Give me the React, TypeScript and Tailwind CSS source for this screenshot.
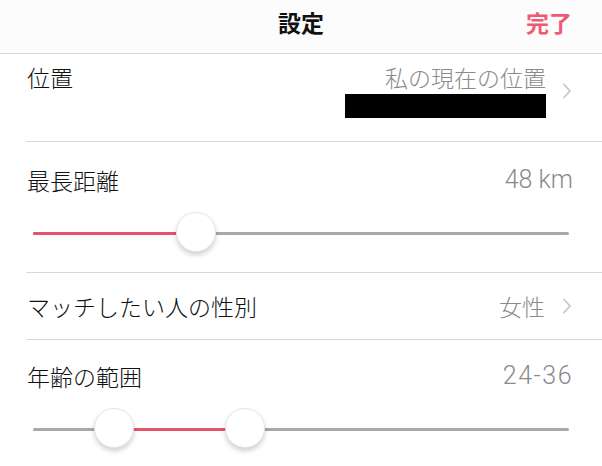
import React from "react";

const jp = "font-['Noto_Sans_CJK_JP','Noto_Sans',sans-serif]";
const num = "font-['Roboto','Liberation_Sans',sans-serif]";

function Chevron() {
  return (
    <svg width="10" height="16" viewBox="0 0 10 16" className="shrink-0">
      <polyline
        points="2,1.5 8,8 2,14.5"
        fill="none"
        stroke="#c7c7cc"
        strokeWidth="1.8"
        strokeLinecap="round"
        strokeLinejoin="round"
      />
    </svg>
  );
}

function Thumb({ className }: { className: string }) {
  return (
    <div
      className={`absolute top-0 h-[40px] w-[40px] rounded-full border border-[#e6e6e6] bg-white shadow-[0_3px_5px_rgba(0,0,0,0.18)] ${className}`}
    />
  );
}

function Divider() {
  return <div className="ml-[26px] border-t border-[#d8d8d8]" />;
}

export default function App() {
  return (
    <div className={`h-[466px] w-[602px] overflow-hidden bg-white ${jp}`}>
      {/* Header */}
      <header className="relative flex h-[54px] items-start justify-center border-b border-[#d6d6d6] bg-[#fcfcfc] pt-[8px]">
        <h1 className="text-[23px] font-bold leading-[28px] text-[#111]">設定</h1>
        <button className="absolute right-[30px] top-[8px] text-[23px] font-bold leading-[28px] text-[#ee5a73]">
          完了
        </button>
      </header>

      {/* Location */}
      <div className="flex items-start justify-between pb-[23px] pl-[27px] pr-[30px] pt-[9px]">
        <span className="text-[23px] font-light leading-[28px] text-[#111]">位置</span>
        <div className="flex items-center gap-[16px]">
          <div className="flex flex-col items-end">
            <span className="text-[23px] font-light leading-[28px] text-[#8a8a8a]">私の現在の位置</span>
            <div className="mt-[3px] h-[24px] w-[201px] bg-black" />
          </div>
          <Chevron />
        </div>
      </div>
      <Divider />

      {/* Max distance */}
      <div className="pb-[20px] pt-[24px]">
        <div className="flex items-center justify-between pl-[27px] pr-[29px]">
          <span className="text-[23px] font-light leading-[28px] text-[#111]">最長距離</span>
          <span className={`${num} text-[25px] font-light leading-[28px] text-[#8a8a8a]`}>48 km</span>
        </div>
        <div className="relative mx-[33px] mt-[18px] h-[40px]">
          <div className="absolute left-0 right-0 top-[20px] h-[3px] rounded-full bg-[#a8a8a8]" />
          <div className="absolute left-0 top-[20px] h-[3px] w-[144px] rounded-full bg-[#e4526b]" />
          <Thumb className="left-[143px]" />
        </div>
      </div>
      <Divider />

      {/* Gender */}
      <div className="flex items-center justify-between pb-[19px] pl-[27px] pr-[30px] pt-[19px]">
        <span className="text-[23px] font-light leading-[28px] text-[#111]">マッチしたい人の性別</span>
        <div className="flex items-center gap-[17px]">
          <span className="text-[23px] font-light leading-[28px] text-[#8a8a8a]">女性</span>
          <Chevron />
        </div>
      </div>
      <Divider />

      {/* Age range */}
      <div className="pt-[22px]">
        <div className="flex items-center justify-between pl-[27px] pr-[29px]">
          <span className="text-[23px] font-light leading-[28px] text-[#111]">年齢の範囲</span>
          <span className={`${num} text-[25px] font-light leading-[28px] tracking-[1.5px] text-[#8a8a8a]`}>24-36</span>
        </div>
        <div className="relative mx-[33px] mt-[18px] h-[40px]">
          <div className="absolute left-0 right-0 top-[20px] h-[3px] rounded-full bg-[#a8a8a8]" />
          <div className="absolute left-[81px] top-[20px] h-[3px] w-[131px] bg-[#e4526b]" />
          <Thumb className="left-[61px]" />
          <Thumb className="left-[192px]" />
        </div>
      </div>
    </div>
  );
}
